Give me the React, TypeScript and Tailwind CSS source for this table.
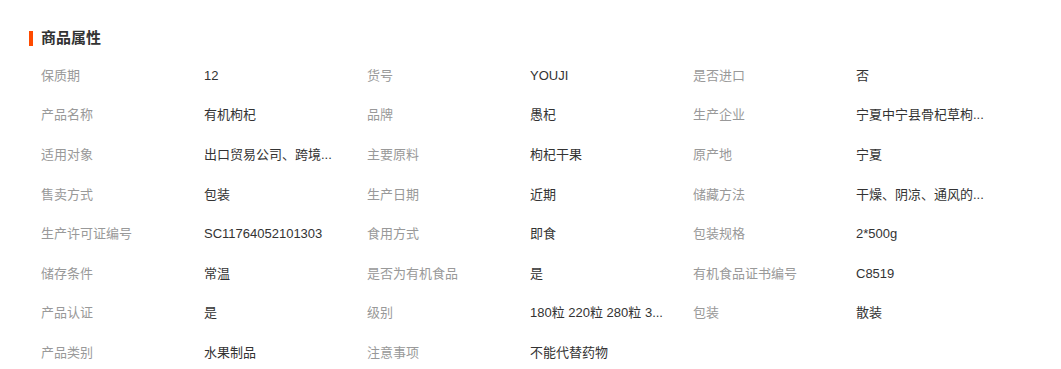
import React from "react";

const rows: [string, string, string, string, string, string][] = [
  ["保质期", "12", "货号", "YOUJI", "是否进口", "否"],
  ["产品名称", "有机枸杞", "品牌", "愚杞", "生产企业", "宁夏中宁县骨杞草枸..."],
  ["适用对象", "出口贸易公司、跨境...", "主要原料", "枸杞干果", "原产地", "宁夏"],
  ["售卖方式", "包装", "生产日期", "近期", "储藏方法", "干燥、阴凉、通风的..."],
  ["生产许可证编号", "SC11764052101303", "食用方式", "即食", "包装规格", "2*500g"],
  ["储存条件", "常温", "是否为有机食品", "是", "有机食品证书编号", "C8519"],
  ["产品认证", "是", "级别", "180粒 220粒 280粒 3...", "包装", "散装"],
  ["产品类别", "水果制品", "注意事项", "不能代替药物", "", ""],
];

export default function App() {
  return (
    <div
      className="w-[1061px] h-[369px] bg-white overflow-hidden"
      style={{ fontFamily: '"Liberation Sans", "Noto Sans CJK SC", sans-serif' }}
    >
      <div className="pt-[29px] pl-[29px] flex items-center h-[47px]">
        <div className="w-[4px] h-[15px] bg-[#ff4a00]" />
        <div className="ml-[8px] text-[15px] font-bold text-[#333] leading-[18px]">商品属性</div>
      </div>
      <div className="pl-[41px] pt-[9px] grid grid-cols-[163px_163px_163px_163px_163px_163px] auto-rows-[39.6px]">
        {rows.map((r, i) => (
          <React.Fragment key={i}>
            {r.map((t, j) => (
              <div
                key={j}
                className={
                  "flex items-center text-[13px] leading-[16px] whitespace-nowrap " +
                  (j % 2 === 0 ? "text-[#999]" : "text-[#333]")
                }
              >
                {t}
              </div>
            ))}
          </React.Fragment>
        ))}
      </div>
    </div>
  );
}
